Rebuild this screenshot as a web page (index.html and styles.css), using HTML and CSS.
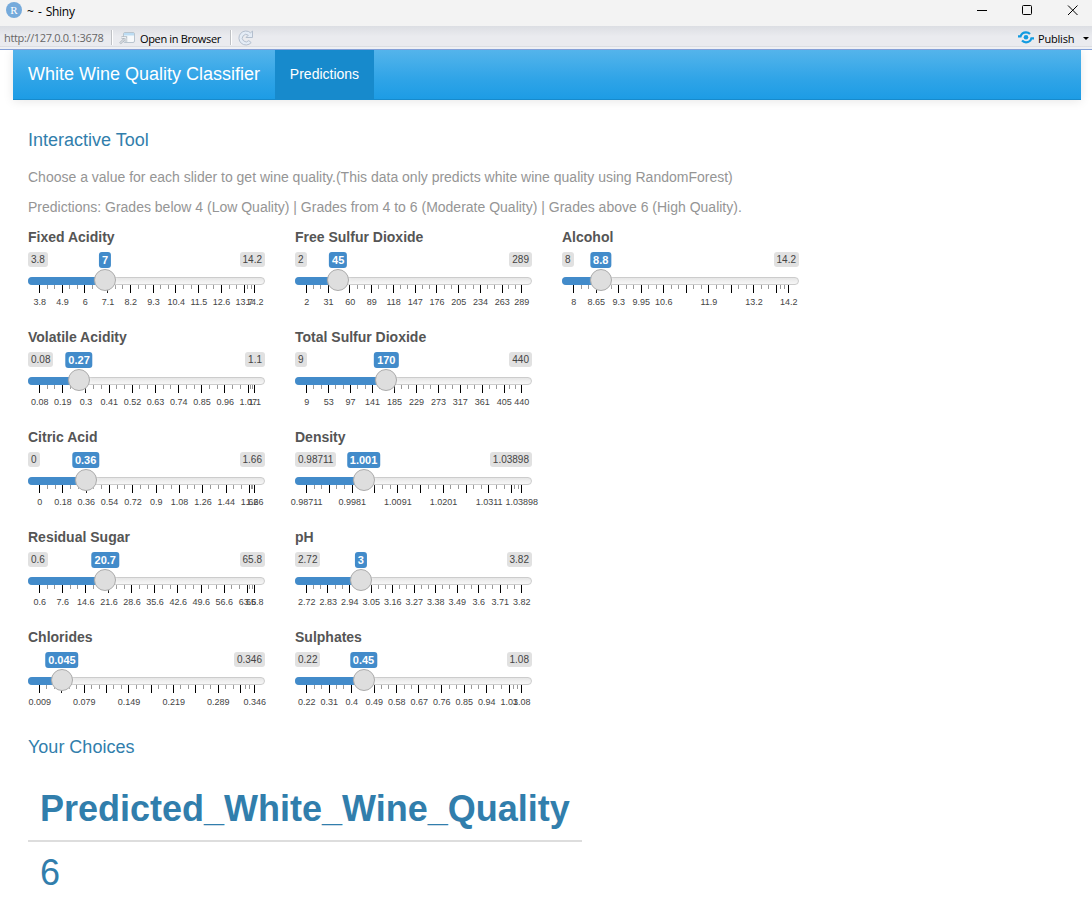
FILE: index.html
```html
<!DOCTYPE html>
<html lang="en">
<head>
<meta charset="utf-8">
<title>~ - Shiny</title>
<link rel="stylesheet" href="styles.css">
</head>
<body>
<header class="titlebar">
  <span class="app-icon">R</span>
  <span class="window-title">~ - Shiny</span>
  <svg class="window-buttons" width="116" height="22" viewBox="0 0 116 22" fill="none" stroke="#000" stroke-width="1">
    <path d="M1 10.5h10"/>
    <rect x="46.5" y="5.5" width="9" height="9" rx="1"/>
    <path d="M92 5.500l9.500 9.500M101.500 5.500l-9.500 9.500"/>
  </svg>
</header>
<div class="toolbar">
  <span class="url">http://127.0.0.1:3678</span>
  <span class="divider"></span>
  <svg class="open-icon" width="17" height="14" viewBox="0 0 17 14">
    <rect x="4.500" y="1.500" width="11" height="10" rx="1.500" fill="#f7f9fb" stroke="#b9c4ce"/>
    <path d="M5 2h10v2.500H5z" fill="#bcdcf3"/>
    <path d="M1 12.500l5-5M2.500 6.500h4.500v4.500" fill="none" stroke="#aeb6be" stroke-width="2.400"/>
    <path d="M1 12.500l5-5M2.500 6.500h4.500v4.500" fill="none" stroke="#eef1f4" stroke-width="1"/>
  </svg>
  <span class="open-label">Open in Browser</span>
  <span class="divider"></span>
  <svg class="reload-icon" width="16" height="16" viewBox="0 0 16 16">
    <path d="M12.600 2.800L14.500 1v6.500H8l2.300-2.300A3.700 3.700 0 1 0 10.800 10.600l2.400 2A7 7 0 1 1 12.600 2.800z" fill="#e4ecf6" stroke="#b4bfce"/>
  </svg>
  <svg class="publish-icon" width="17" height="13" viewBox="0 0 17 13" fill="none" stroke="#129be0" stroke-width="2.200">
    <circle cx="8" cy="6.300" r="2.300" fill="#129be0" stroke="none"/>
    <path d="M0 5.300h2.600C3.300 2.900 5.400 1.300 8 1.300c1.700 0 3 .6 4 1.700"/>
    <path d="M16 7.300h-2.600c-.7 2.400-2.800 4-5.400 4-1.700 0-3-.6-4-1.700"/>
  </svg>
  <span class="publish-label">Publish</span>
  <span class="caret"></span>
</div>
<div class="page">
  <nav class="navbar">
    <span class="brand">White Wine Quality Classifier</span>
    <span class="tab">Predictions</span>
  </nav>
  <main class="content">
    <h4 class="heading">Interactive Tool</h4>
    <p class="help">Choose a value for each slider to get wine quality.(This data only predicts white wine quality using RandomForest)</p>
    <p class="help">Predictions: Grades below 4 (Low Quality) | Grades from 4 to 6 (Moderate Quality) | Grades above 6 (High Quality).</p>
    <div class="columns" id="columns"></div>
    <h4 class="heading choices">Your Choices</h4>
    <table class="result">
      <thead><tr><th>Predicted_White_Wine_Quality</th></tr></thead>
      <tbody><tr><td>6</td></tr></tbody>
    </table>
  </main>
</div>
<script src="sliders.js"></script>
</body>
</html>
```
FILE: styles.css
```css
* { box-sizing: border-box; }
body { margin: 0; height: 918px; overflow: hidden; background: #fff; color: #555; font: 14px/20px "Liberation Sans", Arial, sans-serif; }
.titlebar { display: flex; align-items: center; height: 26px; padding-left: 6px; background: #f3f3f3; color: #000; font: 12px/20px "Open Sans", sans-serif; }
.app-icon { width: 16px; height: 16px; margin-top: -6px; border-radius: 50%; background: #75aadb; color: #fff; font: 11px/16px "Liberation Serif", serif; text-align: center; }
.window-title { margin: -3px 0 0 5px; letter-spacing: -.3px; word-spacing: 1.5px; }
.window-buttons { margin: -4px 0 0 auto; }
.toolbar { display: flex; align-items: center; height: 24px; padding-left: 4px; background: linear-gradient(#dcdee3, #eaebef 45%, #eaebef 87%, #d6d8dc 88%, #eef0f4 93%); border-bottom: 1px solid #84a0d8; color: #000; font: 11px/20px "Open Sans", sans-serif; }
.url { width: 101px; color: #666; letter-spacing: -.35px; white-space: nowrap; }
.divider { width: 2px; height: 15px; margin: 0 6px; border-left: 1px solid #bfc1c5; border-right: 1px solid #fff; }
.open-label { width: 84px; margin-left: 4px; padding-top: 2px; white-space: nowrap; letter-spacing: -.35px; }
.publish-icon { margin-left: auto; }
.publish-label { width: 42px; margin-left: 3px; padding-top: 2px; letter-spacing: -.2px; }
.caret { margin: 2px 3px 0 3px; border: 3px solid transparent; border-top-color: #000; border-bottom: 0; }
.page { padding: 0 11px 0 13px; }
.navbar { display: flex; height: 50px; padding-left: 15px; background: linear-gradient(#54b4eb, #2fa4e7 60%, #1d9ce5); border-bottom: 1px solid #178acc; box-shadow: 0 1px 10px rgba(0, 0, 0, .1); color: #fff; line-height: 48px; clip-path: inset(0 -20px -20px); }
.brand { width: 247px; font-size: 18px; white-space: nowrap; }
.tab { width: 99px; background: #178acc; text-align: center; }
.content { padding: 30px 15px 0; }
.heading { margin: 0 0 17px; color: #317eac; font-size: 18px; font-weight: 400; line-height: 20px; }
.help { margin: 0 0 10px; color: #959595; white-space: nowrap; }
.columns { display: grid; grid-template-columns: repeat(3, 237px); column-gap: 30px; }
.control { height: 100px; }
.control-label { display: block; height: 20px; font-weight: 700; white-space: nowrap; }
.slider { position: relative; height: 80px; }
.bound, .current { position: absolute; top: 5px; padding: 0 3px; border-radius: 3px; white-space: nowrap; }
.bound { height: 15px; background: #e1e1e1; color: #444; font-size: 10px; line-height: 15px; }
.bound.min { left: 0; }
.bound.max { right: 0; }
.current { height: 16px; background: #428bca; color: #fff; font-size: 11px; font-weight: 700; line-height: 16px; transform: translateX(-50%); }
.track { position: absolute; top: 30px; left: 0; width: 100%; height: 8px; border: 1px solid #ccc; border-radius: 8px; background: linear-gradient(#dedede -50%, #fff 150%); }
.fill { position: absolute; top: 30px; left: 0; height: 8px; border-radius: 8px 0 0 8px; background: #428bca; }
.knob { position: absolute; top: 22px; width: 22px; height: 22px; margin-left: -11px; border: 1px solid #ababab; border-radius: 50%; background: #dedede; box-shadow: 1px 1px 3px rgba(255, 255, 255, .3); }
.tick { position: absolute; top: 38px; width: 1px; height: 4px; background: #999; }
.tick.major { height: 8px; background: #000; }
.tick-label { position: absolute; top: 49px; color: #444; font-size: 9px; line-height: 12px; transform: translateX(-50%); white-space: nowrap; }
.choices { margin: 10px 0 0; }
.result { margin-top: 20px; border-collapse: collapse; color: #317eac; font-size: 36px; line-height: 54px; }
.result th, .result td { padding: 0 12px; text-align: left; }
.result th { width: 554px; height: 64px; border-bottom: 2px solid #ddd; }
.result td { height: 62px; }
```
FILE: sliders.js
```js
// Each entry: name, min, max, value, tick step, indexes of shown labels.
const groups = [
  [
    ["Fixed Acidity", 3.8, 14.2, 7, 1.1],
    ["Volatile Acidity", 0.08, 1.1, 0.27, 0.11],
    ["Citric Acid", 0, 1.66, 0.36, 0.18],
    ["Residual Sugar", 0.6, 65.8, 20.7, 7],
    ["Chlorides", 0.009, 0.346, 0.045, 0.035, [0, 2, 4, 6, 8]]
  ],
  [
    ["Free Sulfur Dioxide", 2, 289, 45, 29],
    ["Total Sulfur Dioxide", 9, 440, 170, 44],
    ["Density", 0.98711, 1.03898, 1.001, 0.0055, [0, 2, 4, 6, 8]],
    ["pH", 2.72, 3.82, 3, 0.11],
    ["Sulphates", 0.22, 1.08, 0.45, 0.09]
  ],
  [["Alcohol", 8, 14.2, 8.8, 0.65, [0, 1, 2, 3, 4, 6, 8]]]
];

const KNOB = 22, WIDTH = 237;

function add(parent, className, text, left) {
  const el = document.createElement("span");
  el.className = className;
  if (text !== null) el.textContent = text;
  if (left !== undefined) el.style.left = left + "px";
  parent.appendChild(el);
  return el;
}

function buildSlider([name, min, max, value, step, shown]) {
  const control = document.createElement("div");
  control.className = "control";
  add(control, "control-label", name);
  const slider = document.createElement("div");
  slider.className = "slider";
  control.appendChild(slider);
  const pos = v => (v - min) / (max - min) * (WIDTH - KNOB) + KNOB / 2;
  add(slider, "track", null);
  add(slider, "fill", null).style.width = pos(value) + "px";

  const marks = [];
  for (let i = 0; min + i * step < max - step / 100; i++) marks.push(min + i * step);
  marks.push(max);
  marks.forEach((mark, i) => {
    add(slider, "tick major", null, Math.round(pos(mark)));
    if (i < marks.length - 1) {
      for (let k = 1; k < 3; k++) {
        add(slider, "tick", null, Math.round(pos(mark + (marks[i + 1] - mark) * k / 3)));
      }
    }
    const last = i === marks.length - 1;
    if (last || !shown || shown.includes(i)) {
      const digits = name === "Density" && i > 0 && !last ? 4 : 5;
      add(slider, "tick-label", String(Number(mark.toFixed(digits))), pos(mark) + 0.7);
    }
  });
  add(slider, "knob", null, Math.round(pos(value)));
  // The lower bound gives way when the current-value bubble would cover it.
  const low = add(slider, "bound min", String(min));
  add(slider, "bound max", String(max));
  const current = add(slider, "current", String(value), pos(value));
  return { control, low, current };
}

const columns = document.getElementById("columns");
groups.forEach(group => {
  const column = document.createElement("div");
  columns.appendChild(column);
  group.forEach(item => {
    const { control, low, current } = buildSlider(item);
    column.appendChild(control);
    if (low.getBoundingClientRect().right > current.getBoundingClientRect().left) low.remove();
  });
});
```
